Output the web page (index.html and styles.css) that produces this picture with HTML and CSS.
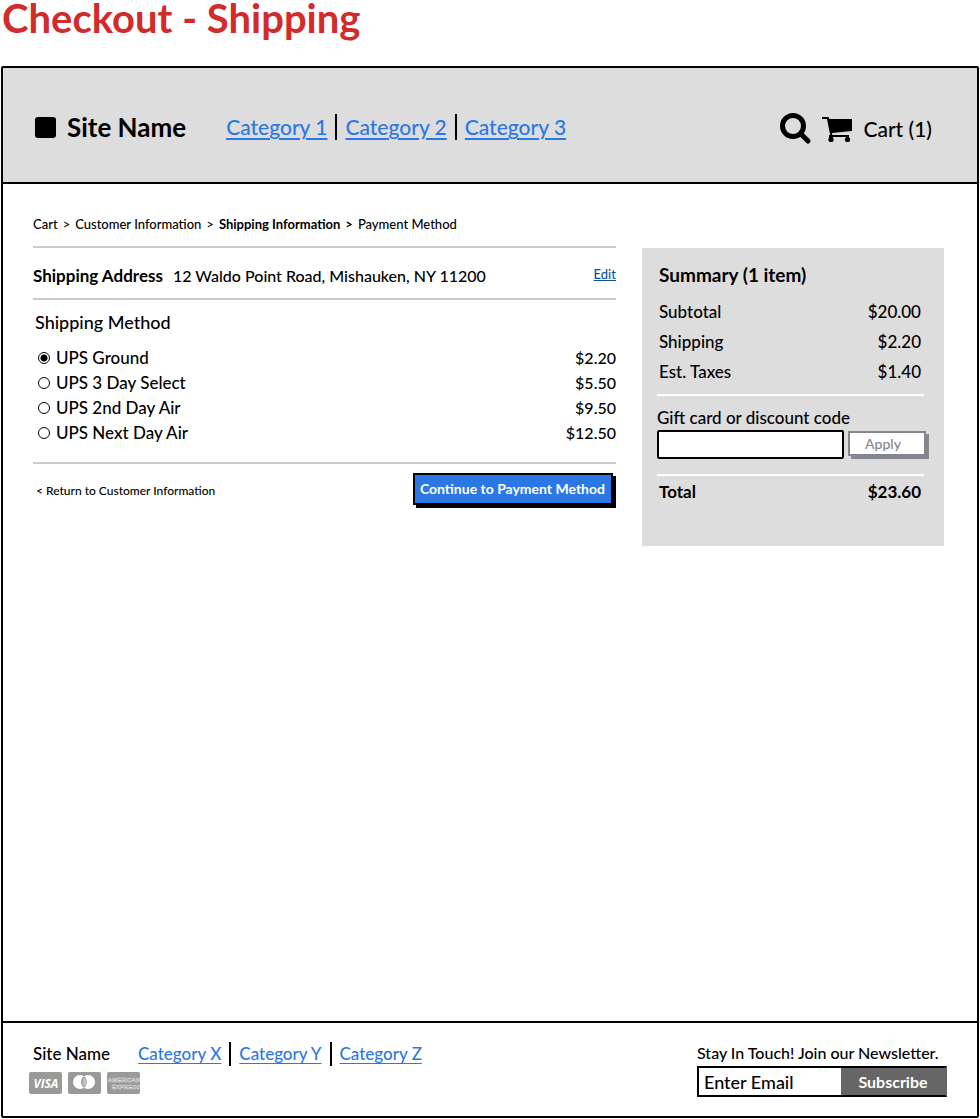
FILE: index.html
```
<!doctype html>
<html lang="en">
  <head>
    <meta charset="utf-8">
    <title>Checkout - Shipping</title>
    <meta name="viewport" content="width=device-width, initial-scale=1">
    <link rel="stylesheet" href="styles.css">
  </head>
  <body>
    <h1 class="page-title">Checkout - Shipping</h1>
    <div class="site">
      <header class="site-header">
        <div class="logo"><span class="logo-mark"></span>Site Name</div>
        <nav>
          <ul class="nav">
            <li><a href="#">Category 1</a></li>
            <li><a href="#">Category 2</a></li>
            <li><a href="#">Category 3</a></li>
          </ul>
        </nav>
        <div class="tools">
          <button class="icon-button" type="button" aria-label="Search">
            <svg width="32" height="32" viewBox="0 0 32 32">
              <circle cx="13" cy="13" r="10.500" fill="none" stroke="#000" stroke-width="5"/>
              <path d="M21 21l7 7" stroke="#000" stroke-width="5" stroke-linecap="round"/>
            </svg>
          </button>
          <a class="cart" href="#">
            <svg width="31" height="27" viewBox="0 0 31 27">
              <path d="M0 1h6.500l1 2H30v12L10 17l.4 2H27v2H8.600L5 3H0z"/>
              <path d="M7 19h4v3H7zM24 19h3v3h-3z"/>
              <circle cx="9" cy="23.500" r="2.600"/>
              <circle cx="25.500" cy="23.500" r="2.600"/>
            </svg>
            Cart (1)
          </a>
        </div>
      </header>

      <main class="main">
        <div class="breadcrumb">
          <span>Cart</span>
          <span>&gt;</span>
          <span>Customer Information</span>
          <span>&gt;</span>
          <b>Shipping Information</b>
          <b>&gt;</b>
          <span>Payment Method</span>
        </div>

        <form class="checkout">
          <div class="address">
            <b>Shipping Address</b>
            <span>12 Waldo Point Road, Mishauken, NY 11200</span>
            <a class="edit" href="#">Edit</a>
          </div>
          <div class="methods">
            <h2>Shipping Method</h2>
            <label class="method">
              <input type="radio" name="shipping" value="ground" checked>
              UPS Ground <span class="price">$2.20</span>
            </label>
            <label class="method">
              <input type="radio" name="shipping" value="3day">
              UPS 3 Day Select <span class="price">$5.50</span>
            </label>
            <label class="method">
              <input type="radio" name="shipping" value="2day">
              UPS 2nd Day Air <span class="price">$9.50</span>
            </label>
            <label class="method">
              <input type="radio" name="shipping" value="next">
              UPS Next Day Air <span class="price">$12.50</span>
            </label>
          </div>
          <div class="actions">
            <a class="return" href="#">&lt; Return to Customer Information</a>
            <button class="continue">Continue to Payment Method</button>
          </div>
        </form>

        <aside class="summary">
          <h2>Summary (1 item)</h2>
          <div class="line"><span>Subtotal</span><span>$20.00</span></div>
          <div class="line"><span>Shipping</span><span>$2.20</span></div>
          <div class="line"><span>Est. Taxes</span><span>$1.40</span></div>
          <form class="discount">
            <label for="code">Gift card or discount code</label>
            <div class="discount-row">
              <input type="text" id="code" name="code">
              <button>Apply</button>
            </div>
          </form>
          <div class="line total"><span>Total</span><span>$23.60</span></div>
        </aside>
      </main>

      <footer class="site-footer">
        <div>
          <div class="footer-links">
            <span>Site Name</span>
            <nav>
              <ul class="nav">
                <li><a href="#">Category X</a></li>
                <li><a href="#">Category Y</a></li>
                <li><a href="#">Category Z</a></li>
              </ul>
            </nav>
          </div>
          <div class="cards">
            <svg width="33" height="22" viewBox="0 0 33 22">
              <rect width="33" height="22" rx="2" fill="#999"/>
              <text class="visa" x="17" y="16" text-anchor="middle">VISA</text>
            </svg>
            <svg width="33" height="22" viewBox="0 0 33 22">
              <rect width="33" height="22" rx="2" fill="#999"/>
              <circle cx="12" cy="10" r="7" fill="#fff"/>
              <circle cx="20" cy="10" r="7" fill="#fff"/>
              <path d="M16 4.300a7 7 0 0 1 0 11.400a7 7 0 0 1 0-11.400z" fill="#999"/>
              <path d="M16.500 5a7 7 0 0 1 0 10a7 7 0 0 1 0-10z" fill="#fff" opacity=".4"/>
            </svg>
            <svg width="33" height="22" viewBox="0 0 33 22">
              <rect width="33" height="22" rx="2" fill="#999"/>
              <text class="amex" x="17" y="10" text-anchor="middle">AMERICAN</text>
              <text class="amex" x="19" y="17" text-anchor="middle">EXPRESS</text>
            </svg>
          </div>
        </div>
        <form class="newsletter">
          <label for="email">Stay In Touch! Join our Newsletter.</label>
          <div class="newsletter-row">
            <input type="text" id="email" name="email" placeholder="Enter Email">
            <button>Subscribe</button>
          </div>
        </form>
      </footer>
    </div>
  </body>
</html>
```

FILE: styles.css
```
* {
  box-sizing: border-box;
}

body {
  margin: 0;
  min-height: 100vh;
  display: flex;
  flex-direction: column;
  font-family: Lato, sans-serif;
  font-size: 16px;
  font-weight: 500;
  line-height: 20px;
  color: #000;
}

h1,
h2 {
  margin: 0;
}

input,
button {
  font: inherit;
}

a {
  color: inherit;
}

.page-title {
  padding: 0 2px;
  height: 66px;
  font-size: 40px;
  line-height: 36px;
  color: #d22b2b;
}

.site {
  flex: 1;
  display: flex;
  flex-direction: column;
  margin: 0 1px 1px;
  border: 2px solid #000;
  border-radius: 2px;
}

/* header */

.site-header {
  display: flex;
  align-items: center;
  gap: 40px;
  padding: 32px 45px 28px 32px;
  min-height: 116px;
  background: #ddd;
  border-bottom: 2px solid #000;
}

.logo {
  display: flex;
  align-items: center;
  gap: 11px;
  font-size: 26px;
  font-weight: bold;
}

.logo-mark {
  width: 21px;
  height: 21px;
  border-radius: 3px;
  background: #000;
}

.nav {
  display: flex;
  margin: 0;
  padding: 0;
  list-style: none;
  line-height: 24px;
  color: #2b78e4;
}

.nav li + li {
  margin-left: 8px;
  padding-left: 8px;
  border-left: 2px solid #000;
}

.nav a {
  text-underline-offset: 3px;
}

.site-header .nav {
  font-size: 21px;
  line-height: 26px;
}

.tools {
  display: flex;
  align-items: center;
  gap: 10px;
  margin-left: auto;
  padding-top: 4px;
}

.icon-button {
  padding: 0;
  border: 0;
  background: none;
}

.icon-button svg,
.cart svg,
.cards svg {
  display: block;
}

.cart {
  display: flex;
  align-items: center;
  gap: 10px;
  font-size: 21px;
  text-decoration: none;
}

/* main */

.main {
  flex: 1;
  display: grid;
  grid-template-columns: 1fr 302px;
  grid-template-rows: 32px auto;
  column-gap: 26px;
  align-content: start;
  align-items: start;
  padding: 30px 33px 30px 30px;
}

.breadcrumb {
  grid-column: 1 / 3;
  display: flex;
  gap: 5px;
  font-size: 13px;
}

.address {
  display: flex;
  align-items: center;
  gap: 10px;
  height: 54px;
  padding-top: 6px;
  border-top: 2px solid #ccc;
  border-bottom: 2px solid #ccc;
}

.address b {
  font-size: 17px;
}

.edit {
  margin-left: auto;
  padding-bottom: 4px;
  font-size: 13px;
  color: #0b5394;
}

.methods {
  padding: 12px 0 17px 2px;
  border-bottom: 2px solid #ccc;
}

.methods h2 {
  margin-bottom: 13px;
  font-size: 18px;
  font-weight: 500;
}

.method {
  display: flex;
  align-items: center;
  height: 25px;
  font-size: 17px;
}

.method input {
  appearance: none;
  width: 12px;
  height: 12px;
  margin: 0 6px 0 3px;
  border: 1px solid #000;
  border-radius: 50%;
}

.method input:checked {
  background: radial-gradient(circle, #000 3px, #fff 4px);
}

.price {
  margin-left: auto;
  font-size: 16px;
}

.actions {
  display: flex;
  justify-content: space-between;
  align-items: center;
  padding: 9px 0 0 3px;
}

.return {
  font-size: 12px;
  text-decoration: none;
}

.continue {
  height: 32px;
  margin: 0 3px 3px 0;
  padding: 0 6px 0 5px;
  border: 2px solid #000;
  background: #2b78e4;
  box-shadow: 3px 3px #000;
  color: #fff;
  font-size: 14px;
  font-weight: bold;
}

/* order summary */

.summary {
  padding: 17px 23px 34px 17px;
  margin-top: 2px;
  background: #ddd;
  font-size: 17px;
}

.summary h2 {
  margin-bottom: 17px;
  font-size: 19px;
}

.line {
  display: flex;
  justify-content: space-between;
  height: 30px;
}

.discount {
  margin: 2px -8px 0 -2px;
}

.discount::before,
.discount::after {
  content: "";
  display: block;
  height: 2px;
  margin-right: 5px;
  background: #fff;
}

.discount label {
  display: block;
  margin: 12px 0 2px;
}

.discount-row {
  display: flex;
  gap: 4px;
  margin-bottom: 15px;
}

.discount-row input {
  flex: 1;
  min-width: 0;
  height: 29px;
  border: 2px solid #000;
  border-radius: 2px;
}

.discount-row button {
  width: 78px;
  height: 25px;
  margin: 1px 3px 3px 0;
  padding: 0 8px 0 0;
  border: 2px solid #85858f;
  background: #fff;
  box-shadow: 3px 3px #85858f;
  color: #85858f;
  font-size: 14px;
}

.total {
  margin-top: 6px;
  font-weight: bold;
}

/* footer */

.site-footer {
  display: flex;
  justify-content: space-between;
  padding: 20px 30px 19px 26px;
  border-top: 2px solid #000;
}

.footer-links {
  display: flex;
  align-items: center;
  gap: 28px;
  height: 22px;
  padding-left: 4px;
  font-size: 17px;
}

.cards {
  display: flex;
  gap: 6px;
  margin-top: 7px;
}

.visa {
  font: italic bold 12px "Open Sans", sans-serif;
  fill: #fff;
}

.amex {
  font: bold 6px "Liberation Sans", sans-serif;
  fill: none;
  stroke: #ddd;
  stroke-width: 0.4;
}

.newsletter label {
  display: block;
  height: 22px;
}

.newsletter-row {
  display: flex;
  width: 250px;
  height: 31px;
  margin-top: 1px;
  border: 2px solid #000;
  border-right-color: #666;
}

.newsletter-row input {
  flex: 1;
  min-width: 0;
  padding: 0 5px;
  border: 0;
  font-size: 18px;
}

.newsletter-row input::placeholder {
  color: #000;
}

.newsletter-row button {
  width: 104px;
  padding: 0;
  border: 0;
  background: #666;
  color: #fff;
  font-weight: bold;
}
```
